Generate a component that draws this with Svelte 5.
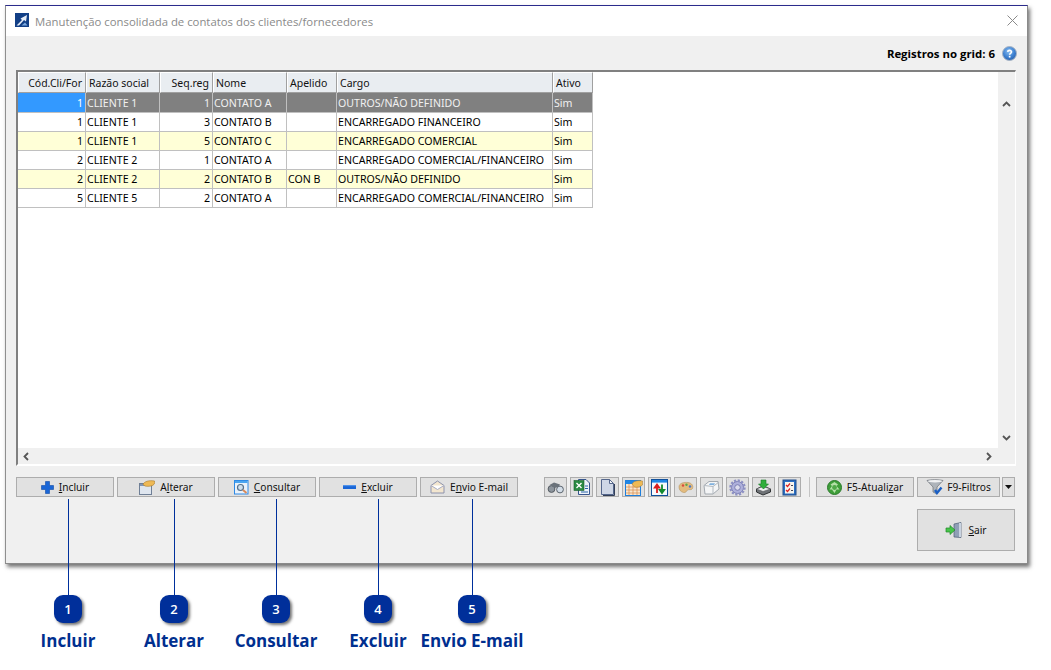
<script>
  const cols = [
    { t: 'Cód.Cli/For', r: true },
    { t: 'Razão social' },
    { t: 'Seq.reg', r: true },
    { t: 'Nome' },
    { t: 'Apelido' },
    { t: 'Cargo' },
    { t: 'Ativo' }
  ];
  const rows = [
    ['1', 'CLIENTE 1', '1', 'CONTATO A', '', 'OUTROS/NÃO DEFINIDO', 'Sim'],
    ['1', 'CLIENTE 1', '3', 'CONTATO B', '', 'ENCARREGADO FINANCEIRO', 'Sim'],
    ['1', 'CLIENTE 1', '5', 'CONTATO C', '', 'ENCARREGADO COMERCIAL', 'Sim'],
    ['2', 'CLIENTE 2', '1', 'CONTATO A', '', 'ENCARREGADO COMERCIAL/FINANCEIRO', 'Sim'],
    ['2', 'CLIENTE 2', '2', 'CONTATO B', 'CON B', 'OUTROS/NÃO DEFINIDO', 'Sim'],
    ['5', 'CLIENTE 5', '2', 'CONTATO A', '', 'ENCARREGADO COMERCIAL/FINANCEIRO', 'Sim']
  ];
  const callouts = [
    { n: 1, x: 68, t: 'Incluir' },
    { n: 2, x: 174, t: 'Alterar' },
    { n: 3, x: 276, t: 'Consultar' },
    { n: 4, x: 378, t: 'Excluir' },
    { n: 5, x: 472, t: 'Envio E-mail' }
  ];
</script>

<div class="page">
  <section class="win">
    <header class="title">
      <svg class="logo" width="14" height="14" viewBox="0 0 14 14">
        <rect width="14" height="14" fill="#123f86" />
        <path d="M1.5 12.5 L7 7 L5.5 5.5 L12 2 L11 8.5 L9 7 L4 12.5 Z" fill="#e6edf7" />
        <path d="M6.5 12.5 L10 9.5 L12.5 12.5 Z" fill="#7aa8de" />
      </svg>
      <span class="title-text">Manutenção consolidada de contatos dos clientes/fornecedores</span>
      <svg class="close" width="11" height="11" viewBox="0 0 11 11">
        <path d="M.5 .5 L10.5 10.5 M10.5 .5 L.5 10.5" stroke="#8a8a8a" fill="none" />
      </svg>
    </header>

    <div class="body">
      <div class="info">
        <span class="count">Registros no grid: 6</span>
        <svg width="15" height="15" viewBox="0 0 15 15">
          <defs>
            <radialGradient id="hb" cx=".45" cy=".35" r=".7">
              <stop offset="0" stop-color="#8cc0f2" />
              <stop offset=".6" stop-color="#3c7fd0" />
              <stop offset="1" stop-color="#2a5ea8" />
            </radialGradient>
          </defs>
          <circle cx="7.5" cy="7.5" r="7" fill="url(#hb)" stroke="#a7b4c4" />
          <path d="M5.6 5.8 C5.8 3.8 9.6 3.9 9.5 6 C9.4 7.4 7.6 7.3 7.6 8.8" fill="none" stroke="#fff" stroke-width="1.6" />
          <rect x="6.8" y="9.8" width="1.7" height="1.7" fill="#fff" />
        </svg>
      </div>

      <div class="grid">
        <div class="grid-main">
          <div class="grid-content">
            <div class="row head">
              {#each cols as c}
                <div class="hcell" class:right={c.r}>{c.t}</div>
              {/each}
            </div>
            {#each rows as r, i}
              <div class="row" class:sel={i === 0} class:alt={i === 2 || i === 4}>
                {#each r as v, j}
                  <div class="cell" class:right={j === 0 || j === 2}>{v}</div>
                {/each}
              </div>
            {/each}
          </div>
          <div class="vbar">
            <svg class="chev" width="9" height="6" viewBox="0 0 9 6"><path d="M1 5 L4.5 1.5 L8 5" fill="none" stroke="#555" stroke-width="1.8" /></svg>
            <svg class="chev" width="9" height="6" viewBox="0 0 9 6"><path d="M1 1 L4.5 4.5 L8 1" fill="none" stroke="#555" stroke-width="1.8" /></svg>
          </div>
        </div>
        <div class="hbar">
          <svg width="6" height="9" viewBox="0 0 6 9"><path d="M5 1 L1.5 4.5 L5 8" fill="none" stroke="#555" stroke-width="1.8" /></svg>
          <svg width="6" height="9" viewBox="0 0 6 9"><path d="M1 1 L4.5 4.5 L1 8" fill="none" stroke="#555" stroke-width="1.8" /></svg>
        </div>
      </div>

      <div class="actions">
        <button class="btn">
          <svg width="13" height="13" viewBox="0 0 13 13"><path d="M4.5 .5 H8.5 V4.5 H12.5 V8.5 H8.5 V12.5 H4.5 V8.5 H.5 V4.5 H4.5 Z" fill="#1a66d6" stroke="#0f4aa8" stroke-width=".6" /></svg>
          <span><u>I</u>ncluir</span>
        </button>
        <button class="btn">
          <svg width="16" height="15" viewBox="0 0 16 15">
            <rect x=".5" y="3.5" width="12" height="11" fill="#dfe6ef" stroke="#6f7f96" />
            <rect x="1" y="4" width="11" height="2" fill="#7f96b8" />
            <path d="M4 4.5 C5 1.5 10 0 15.5 1 C16.3 3 15 5.5 12 6 C10 6.4 8 6.5 6 6 Z" fill="#eeb955" stroke="#a87b2e" stroke-width=".6" />
          </svg>
          <span>A<u>l</u>terar</span>
        </button>
        <button class="btn">
          <svg width="15" height="15" viewBox="0 0 15 15">
            <rect x=".5" y=".5" width="13.5" height="13.5" fill="#e9f2fb" stroke="#2e8ae6" />
            <rect x="1" y="1" width="12.5" height="2" fill="#4aa5f0" />
            <circle cx="6.5" cy="7.5" r="3" fill="#cfe0ee" stroke="#55708a" stroke-width="1.2" />
            <path d="M9 10 L12.5 13" stroke="#d98a5a" stroke-width="2" />
          </svg>
          <span><u>C</u>onsultar</span>
        </button>
        <button class="btn">
          <svg width="13" height="4" viewBox="0 0 13 4"><rect width="13" height="4" fill="#1a66d6" /><rect width="13" height="1.2" fill="#4f92ea" /></svg>
          <span><u>E</u>xcluir</span>
        </button>
        <button class="btn">
          <svg width="15" height="14" viewBox="0 0 15 14">
            <path d="M1 5.5 L7.5 1 L14 5.5 V13 H1 Z" fill="#f3e6cf" stroke="#8d93ad" />
            <path d="M1 5.5 L7.5 9.5 L14 5.5" fill="#fff" stroke="#a7abc1" />
          </svg>
          <span>E<u>n</u>vio E-mail</span>
        </button>

        <div class="tools">
          <button class="tool" aria-label="Localizar">
            <svg width="18" height="13" viewBox="0 0 18 13">
              <circle cx="4.5" cy="8" r="3.4" fill="#8d959d" stroke="#555c63" />
              <circle cx="13" cy="8.5" r="3.4" fill="#d3dde7" stroke="#5d6670" />
              <path d="M2.5 4 L7 1.5 L13 3.5 L12 5.5 L8 7 Z" fill="#6a727a" />
            </svg>
          </button>
          <button class="tool" aria-label="Excel">
            <svg width="18" height="18" viewBox="0 0 18 18">
              <path d="M5.5 1.5 H13 L16.5 5 V16.5 H5.5 Z" fill="#eef3fa" stroke="#37558c" />
              <rect x="1" y="2.5" width="10" height="10" fill="#2a8a42" stroke="#1a5f2c" stroke-width=".6" />
              <path d="M3.5 5 L8.5 10 M8.5 5 L3.5 10" stroke="#fff" stroke-width="1.4" />
              <path d="M12 8 H15 M12 10.5 H15 M8 14 H15" stroke="#2a64a8" />
            </svg>
          </button>
          <button class="tool" aria-label="Documento">
            <svg width="15" height="17" viewBox="0 0 15 17">
              <path d="M1.5 .5 H9.5 L13.5 4.5 V15.5 H1.5 Z" fill="#cfd7e6" stroke="#55678c" />
              <path d="M9.5 .5 V4.5 H13.5 Z" fill="#f5f7fb" stroke="#55678c" />
              <path d="M3 16.5 H14.5 V5" stroke="#333f58" fill="none" />
            </svg>
          </button>
          <button class="tool" aria-label="Tabela">
            <svg width="18" height="17" viewBox="0 0 18 17">
              <rect x=".5" y="1.5" width="15" height="15" fill="#f7e7d0" stroke="#1f7fdc" />
              <rect x="1" y="2" width="14" height="3" fill="#1e86e6" />
              <path d="M1 8 H15 M1 11 H15 M1 14 H15 M4 5 V16 M8 5 V16 M12 5 V16" stroke="#d8894a" stroke-width=".7" />
              <path d="M7 5 C8 2 13 1 17.5 2 V6 C15 8 12 8.5 9.5 8 Z" fill="#eeb955" stroke="#a87b2e" stroke-width=".5" />
            </svg>
          </button>
          <button class="tool" aria-label="Ordenar">
            <svg width="17" height="17" viewBox="0 0 17 17">
              <rect x=".5" y=".5" width="16" height="16" fill="#f6f9fd" stroke="#10509c" />
              <rect x="1" y="1" width="15" height="2.6" fill="#1e86e6" />
              <path d="M6 14 V7 M3.8 8.5 L6 5.5 L8.2 8.5 Z" stroke="#d81e1e" stroke-width="1.8" fill="#d81e1e" />
              <path d="M11 5.5 V12.5 M8.8 11 L11 14 L13.2 11 Z" stroke="#128a2e" stroke-width="1.8" fill="#128a2e" />
            </svg>
          </button>
          <button class="tool" aria-label="Cores">
            <svg width="16" height="13" viewBox="0 0 16 13">
              <path d="M1 6 C1 2 6 1 10 1.5 C14 2 15.5 5 14.5 7.5 C13.5 9.5 11 8 9.5 9 C8 10.5 8 12 5.5 11.5 C3 11 1 9 1 6 Z" fill="#e3bb7e" stroke="#b6935f" stroke-width=".6" />
              <circle cx="5" cy="4.5" r="1.2" fill="#d94c3c" />
              <circle cx="8.5" cy="3.8" r="1.2" fill="#5ba84a" />
              <circle cx="12" cy="5.5" r="1.2" fill="#4a78c8" />
            </svg>
          </button>
          <button class="tool" aria-label="Imprimir">
            <svg width="17" height="15" viewBox="0 0 17 15">
              <path d="M1 5.5 L6 1.5 H15 L16 9 L10 14 H2 Z" fill="#f4f5f6" stroke="#a3a9b0" />
              <path d="M1 5.5 L10 6.5 L16 2 M10 6.5 V14" stroke="#b3b9c0" fill="none" />
              <path d="M7 3.2 H12 L11 5 H6 Z" fill="#7fb0de" />
            </svg>
          </button>
          <button class="tool" aria-label="Configurar">
            <svg width="17" height="17" viewBox="0 0 17 17">
              <circle cx="8.5" cy="8.5" r="6" fill="#aeb0dc" stroke="#7b7eb2" />
              <circle cx="8.5" cy="8.5" r="7" fill="none" stroke="#8d90c4" stroke-width="2.4" stroke-dasharray="2.2 1.46" />
              <circle cx="8.5" cy="8.5" r="2.8" fill="#dcdcee" stroke="#7b7eb2" />
            </svg>
          </button>
          <button class="tool" aria-label="Baixar">
            <svg width="17" height="17" viewBox="0 0 17 17">
              <path d="M1.5 10 L8 7 L15.5 10 V13 L8 16 L1.5 13 Z" fill="#6f7377" stroke="#2f3234" />
              <path d="M1.5 10 L8 12.5 L15.5 10 L8 7.5 Z" fill="#eceeef" stroke="#55585b" stroke-width=".6" />
              <path d="M6 1 H11 V5 H13.5 L8.5 10 L3.5 5 H6 Z" fill="#2fae3c" stroke="#1a7a28" stroke-width=".6" />
            </svg>
          </button>
          <button class="tool" aria-label="Lista">
            <svg width="15" height="17" viewBox="0 0 15 17">
              <rect x="1" y="1" width="13" height="15" fill="#2a6fc4" stroke="#234e8c" />
              <rect x="3" y="3" width="9" height="11.5" fill="#f7f5ee" />
              <path d="M4 6 L5.5 7.5 L8 4.5 M4 11 L5.5 12.5 L8 9.5" stroke="#d22" stroke-width="1.2" fill="none" />
              <path d="M9 6.5 H11 M9 11.5 H11" stroke="#445" />
            </svg>
          </button>
        </div>

        <div class="sep"></div>

        <button class="btn">
          <svg width="15" height="15" viewBox="0 0 15 15">
            <circle cx="7.5" cy="7.5" r="7" fill="#3f9e3a" stroke="#2a7a2a" />
            <path d="M7.5 2 L11 4.5 L9.5 6 L12.5 9.5 H9.5 L7.5 13 L5 9.5 L2.5 9.5 L5 6 L3.5 4.5 Z" fill="#b4dfa8" />
            <circle cx="7.5" cy="7.5" r="2.4" fill="#4fa848" />
          </svg>
          <span>F5-Atuali<u>z</u>ar</span>
        </button>
        <button class="btn filter">
          <svg width="18" height="17" viewBox="0 0 18 17">
            <path d="M1 1.5 C4 .5 13 .5 17 1.5 L11 8 V15 L7 13 V8 Z" fill="#aeb4ba" stroke="#6a7077" stroke-width=".7" />
            <ellipse cx="9" cy="2.2" rx="7" ry="1.3" fill="#f1f2f3" />
            <path d="M9 11 L11 14 L15.5 8.5" stroke="#1a5fc4" stroke-width="2.4" fill="none" />
          </svg>
          <span>F9-Filtros</span>
        </button>
        <button class="drop" aria-label="Mais">
          <svg width="7" height="4" viewBox="0 0 7 4"><path d="M0 0 H7 L3.5 4 Z" fill="#111" /></svg>
        </button>
      </div>

      <div class="exit">
        <button class="btn sair">
          <svg width="18" height="17" viewBox="0 0 18 17">
            <path d="M9 2 L16 .5 V15.5 L9 15 Z" fill="#8f9fb6" stroke="#4e5d75" stroke-width=".7" />
            <path d="M14 1 H16 V15 H14 Z" fill="#c9d3e0" />
            <path d="M1 6 H5 V3.5 L10 8 L5 12.5 V10 H1 Z" fill="#47c44a" stroke="#218a2a" stroke-width=".7" />
          </svg>
          <span><u>S</u>air</span>
        </button>
      </div>
    </div>
  </section>

  {#each callouts as c}
    <div class="callout" style="left:{c.x}px">
      <div class="stem"></div>
      <div class="badge">{c.n}</div>
      <div class="label">{c.t}</div>
    </div>
  {/each}
</div>

<style>
  :global(body) {
    margin: 0;
    background: #fff;
  }
  .page {
    position: relative;
    width: 1051px;
    height: 670px;
    padding: 5px;
    box-sizing: border-box;
    overflow: hidden;
    font-family: "Noto Sans", "Open Sans", sans-serif;
    font-size: 10.5px;
    color: #000;
  }
  .win {
    width: 1023px;
    height: 559px;
    box-sizing: border-box;
    background: #f0f0f0;
    border-top: 1px solid #2b2b8c;
    border-left: 1px solid #8f8f8f;
    border-right: 1px solid #8a8a8a;
    border-bottom: 1px solid #8a8a8a;
    box-shadow: 2px 3px 4px rgba(0, 0, 0, 0.55);
    display: flex;
    flex-direction: column;
  }
  .title {
    height: 30px;
    flex: none;
    background: #fff;
    display: flex;
    align-items: center;
    padding: 0 9px 0 9px;
    gap: 6px;
  }
  .logo,
  .close {
    margin-bottom: 2px;
  }
  .title-text {
    flex: 1;
    font-family: "Open Sans", sans-serif;
    font-size: 11.35px;
    color: #8a8a8a;
  }
  .body {
    flex: 1;
    display: flex;
    flex-direction: column;
    padding: 0 11px 0 10px;
  }
  .info {
    height: 34px;
    flex: none;
    display: flex;
    align-items: center;
    justify-content: flex-end;
    gap: 7px;
    margin-right: -1px;
  }
  .count {
    font-family: "Open Sans", sans-serif;
    font-weight: 700;
    font-size: 11.4px;
  }
  .grid {
    height: 396px;
    flex: none;
    box-sizing: border-box;
    border-top: 2px solid #808080;
    border-left: 2px solid #808080;
    border-right: 1px solid #fff;
    border-bottom: 2px solid #fff;
    background: #f0f0f0;
    display: flex;
    flex-direction: column;
  }
  .grid-main {
    flex: 1;
    min-height: 0;
    display: flex;
  }
  .grid-content {
    flex: 1;
    background: #fff;
  }
  .row {
    display: grid;
    grid-template-columns: 68px 74px 53px 74px 50px 216px 40px;
    width: 575px;
    height: 19px;
    box-sizing: border-box;
  }
  .row.head {
    height: 21px;
  }
  .row.sel {
    height: 20px;
  }
  .hcell {
    background: #e9edf1;
    border-top: 1px solid #fff;
    border-left: 1px solid #fff;
    border-right: 1px solid #a0a0a0;
    border-bottom: 1px solid #a0a0a0;
    padding: 0 2px;
    line-height: 20px;
    white-space: nowrap;
    overflow: hidden;
    color: #111;
  }
  .hcell.right {
    padding-right: 3px;
    text-align: right;
  }
  .cell {
    border-right: 1px solid #c0c0c0;
    border-bottom: 1px solid #c0c0c0;
    padding: 0 1px;
    line-height: 19px;
    white-space: nowrap;
    overflow: hidden;
    font-size: 10.6px;
    background: #fff;
  }
  .cell.right {
    text-align: right;
    padding-right: 2px;
  }
  .alt .cell {
    background: #ffffd7;
  }
  .sel .cell {
    line-height: 20px;
    background: #808080;
    color: #f0f0f0;
  }
  .sel .cell:first-child {
    background: #3399ff;
    color: #fff;
  }
  .vbar {
    width: 17px;
    flex: none;
    display: flex;
    flex-direction: column;
    justify-content: space-between;
    align-items: center;
    padding: 29px 0 7px;
    box-sizing: border-box;
  }
  .hbar {
    height: 16px;
    flex: none;
    display: flex;
    justify-content: space-between;
    align-items: center;
    padding: 0 23px 0 5px;
  }
  .chev {
    display: block;
  }
  .actions {
    margin-top: 11px;
    height: 20px;
    display: flex;
    align-items: flex-start;
    gap: 3px;
  }
  .btn {
    width: 98px;
    height: 20px;
    box-sizing: border-box;
    flex: none;
    padding: 0;
    background: #e1e1e1;
    border: 1px solid #adadad;
    border-radius: 0;
    display: flex;
    align-items: center;
    justify-content: center;
    gap: 5px;
    font: inherit;
    font-size: 10.2px;
    color: #111;
  }
  .btn.filter {
    width: 83px;
    gap: 3px;
  }
  .tools {
    margin-left: 23px;
    display: flex;
    flex: none;
    gap: 3px;
  }
  .tool {
    width: 23px;
    height: 20px;
    box-sizing: border-box;
    flex: none;
    padding: 0;
    background: #e1e1e1;
    border: 1px solid #adadad;
    border-radius: 0;
    display: flex;
    align-items: center;
    justify-content: center;
  }
  .sep {
    width: 1px;
    height: 20px;
    flex: none;
    background: #c4c4c4;
    margin: 0 3px 0 5px;
  }
  .drop {
    width: 13px;
    height: 20px;
    box-sizing: border-box;
    flex: none;
    padding: 0;
    margin-left: -1px;
    background: #e1e1e1;
    border: 1px solid #adadad;
    border-radius: 0;
    display: flex;
    align-items: center;
    justify-content: center;
  }
  .exit {
    margin-top: 12px;
    display: flex;
    justify-content: flex-end;
    padding-right: 1px;
  }
  .btn.sair {
    height: 42px;
  }
  .callout {
    position: absolute;
    top: 499px;
    width: 0;
    display: flex;
    flex-direction: column;
    align-items: center;
  }
  .stem {
    width: 1px;
    height: 96px;
    background: #00309c;
    flex: none;
  }
  .badge {
    width: 28px;
    height: 28px;
    flex: none;
    border-radius: 9px;
    background: #002f9a;
    color: #fff;
    font-family: "Open Sans", sans-serif;
    font-weight: 600;
    font-size: 13px;
    line-height: 28px;
    text-align: center;
    box-shadow: 2px 2px 3px rgba(0, 0, 0, 0.55);
  }
  .label {
    margin-top: 6px;
    white-space: nowrap;
    font-family: "Open Sans", sans-serif;
    font-weight: 700;
    font-size: 17px;
    line-height: 24px;
    color: #002f8f;
  }
</style>
